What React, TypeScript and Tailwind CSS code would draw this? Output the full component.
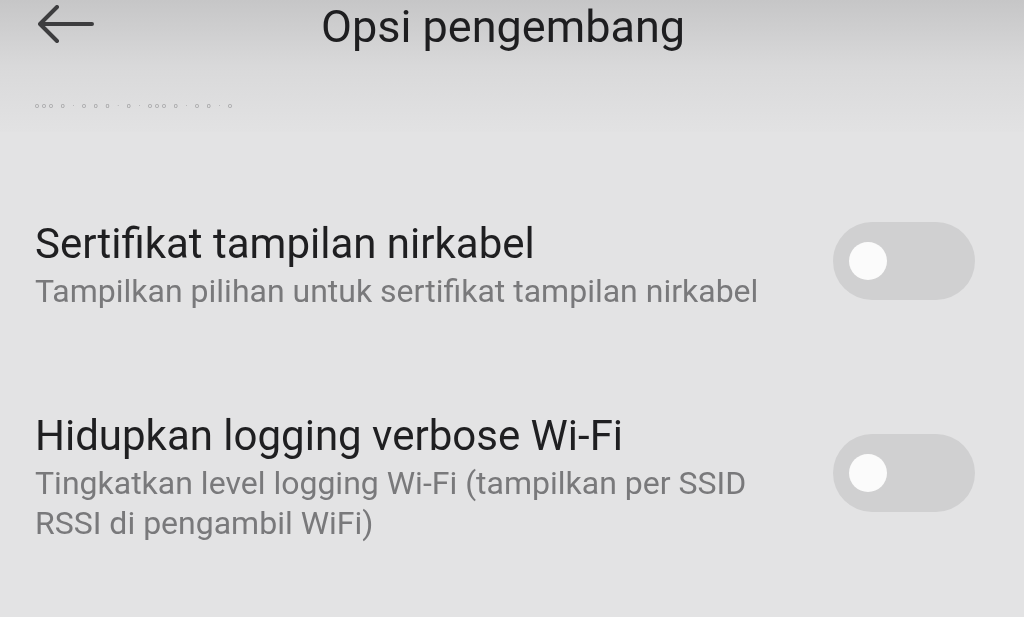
import React from 'react';

type Item = { title: string; desc: string[] };

const items: Item[] = [
  {
    title: 'Sertifikat tampilan nirkabel',
    desc: ['Tampilkan pilihan untuk sertifikat tampilan nirkabel'],
  },
  {
    title: 'Hidupkan logging verbose Wi-Fi',
    desc: ['Tingkatkan level logging Wi-Fi (tampilkan per SSID', 'RSSI di pengambil WiFi)'],
  },
];

const Toggle = () => (
  <div className="mb-[8px] flex h-[78px] w-[142px] shrink-0 items-center rounded-full bg-[#d0d0d1] pl-[16px] blur-[0.6px]">
    <div className="h-[38px] w-[38px] rounded-full bg-[#fbfbfb]" />
  </div>
);

const BackArrow = () => (
  <svg width="58" height="40" viewBox="0 0 58 40" fill="none" className="mt-[4px] shrink-0 blur-[0.5px]">
    <path d="M55 20H4M20 3L3 20l17 17" stroke="#3d3d3f" strokeWidth="4" strokeLinecap="round" strokeLinejoin="round" />
  </svg>
);

export default function App() {
  return (
    <div className="flex h-[617px] w-[1024px] flex-col overflow-hidden bg-[#e3e3e4] font-['Roboto',sans-serif]">
      <div className="flex flex-col bg-gradient-to-b from-[#c6c6c7] via-[#d9d9da] to-[#e2e2e3]">
        <header className="flex h-[72px] shrink-0 items-start pl-[37px]">
          <BackArrow />
          <h1 className="ml-[226px] mt-[1px] text-[45px] leading-[52px] text-[#1e1e20] blur-[0.4px]">
            Opsi pengembang
          </h1>
        </header>
        <div className="mt-[28px] flex h-[12px] items-center pl-[35px] pb-[20px] box-content">
          <span className="text-[7px] tracking-[3px] text-[#9a9a9c] blur-[0.6px]">ooo o · o o o · o · ooo o · o o · o</span>
        </div>
      </div>

      <div className="flex flex-col pt-[87px]">
        {items.map((it, i) => (
          <div key={i} className={`flex items-center justify-between pl-[35px] pr-[49px] ${i === 0 ? 'mb-[100px]' : ''}`}>
            <div className="flex flex-col blur-[0.4px]">
              <div className="text-[42px] leading-[50px] text-[#1f1f21]">{it.title}</div>
              <div className="mt-[2px] text-[32px] leading-[40px] text-[#79797b]">
                {it.desc.map((d) => (
                  <div key={d}>{d}</div>
                ))}
              </div>
            </div>
            <Toggle />
          </div>
        ))}
      </div>
    </div>
  );
}
